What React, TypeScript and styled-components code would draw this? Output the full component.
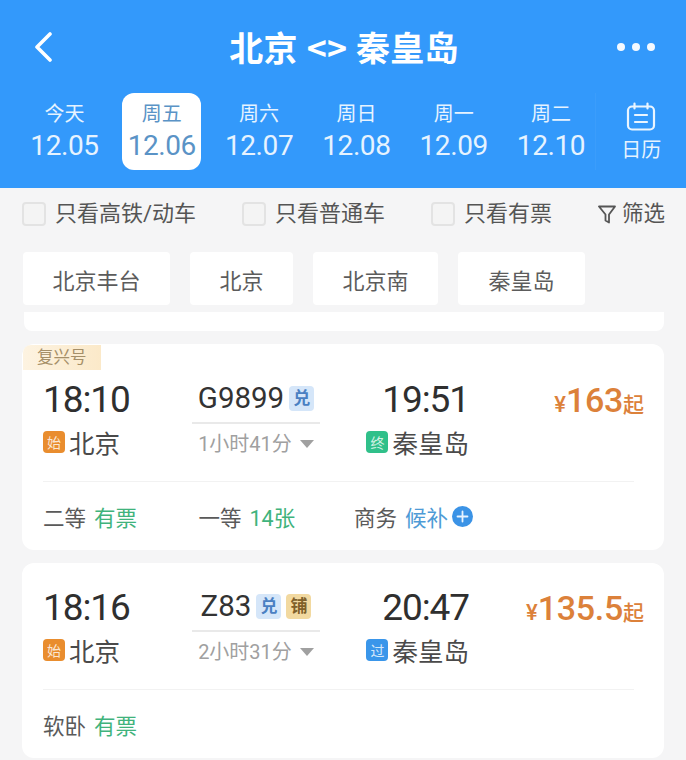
import React from "react";
import styled, { createGlobalStyle } from "styled-components";

const Global = createGlobalStyle`
  html, body { margin: 0; padding: 0; background: #f5f5f6; }
  * { box-sizing: border-box; }
  body { font-family: Roboto, "Noto Sans CJK SC", sans-serif; }
`;

const Page = styled.div`
  width: 686px;
  height: 760px;
  overflow: hidden;
  background: #f5f5f6;
`;

const Header = styled.header`
  height: 188px;
  background: #3399fb;
  color: #fff;
`;

const TitleBar = styled.div`
  height: 93px;
  display: grid;
  grid-template-columns: 1fr auto 1fr;
  align-items: center;
  padding: 0 31px 0 33px;
`;

const BackButton = styled.div`
  display: flex;
  align-items: center;
`;

const Title = styled.h1`
  margin: 0;
  font-family: "Noto Sans CJK SC", sans-serif;
  font-size: 34px;
  font-weight: 700;
  line-height: 1;
  letter-spacing: 0.2px;
  word-spacing: 1px;
`;

const Dots = styled.div`
  justify-self: end;
  display: flex;
  gap: 7px;
`;

const Dot = styled.span`
  width: 8px;
  height: 8px;
  border-radius: 50%;
  background: #f4f9ff;
`;

const DateStrip = styled.div`
  display: flex;
  align-items: stretch;
  padding-left: 25px;
  height: 77px;
`;

const DateTabs = styled.div`
  display: flex;
  gap: 18.3px;
`;

const DateTab = styled.div<{ $active?: boolean }>`
  width: 79px;
  height: 77px;
  border-radius: 12px;
  display: flex;
  flex-direction: column;
  align-items: center;
  background: ${(p) => (p.$active ? "#fff" : "transparent")};
  color: ${(p) => (p.$active ? "#5a93c6" : "#e6f3ff")};
`;

const Weekday = styled.span`
  margin-top: 6px;
  height: 28px;
  font-size: 20px;
  line-height: 28px;
  font-family: "Noto Sans CJK SC", sans-serif;
`;

const DateText = styled.span`
  height: 38px;
  font-size: 28px;
  line-height: 38px;
  letter-spacing: -0.4px;
`;

const CalendarCell = styled.div`
  width: 91px;
  margin-left: 5px;
  border-left: 1px solid rgba(255, 255, 255, 0.04);
  display: flex;
  flex-direction: column;
  align-items: center;
  color: #e6f3ff;
  padding-top: 9px;
`;

const CalendarLabel = styled.span`
  margin-top: 3px;
  font-size: 20px;
  line-height: 30px;
  font-family: "Noto Sans CJK SC", sans-serif;
`;

const FilterRow = styled.div`
  height: 52px;
  display: flex;
  align-items: center;
  justify-content: space-between;
  padding: 0 21px 0 22px;
`;

const CheckItem = styled.label`
  display: flex;
  align-items: center;
  gap: 9px;
  font-size: 22px;
  line-height: 30px;
  color: #555;
`;

const CheckBox = styled.span`
  width: 24px;
  height: 24px;
  border: 2px solid #e3e3e3;
  border-radius: 4px;
  background: #f4f4f4;
`;

const FilterButton = styled.div`
  display: flex;
  align-items: center;
  gap: 6px;
  font-size: 21.5px;
  line-height: 30px;
  color: #555;
`;

const ChipRow = styled.div`
  display: flex;
  gap: 20px;
  margin-top: 12px;
  padding-left: 23px;
`;

const Chip = styled.div<{ $w: number }>`
  width: ${(p) => p.$w}px;
  height: 53px;
  background: #fff;
  border-radius: 4px;
  display: flex;
  align-items: center;
  justify-content: center;
  font-size: 22px;
  color: #5c5c5c;
`;

const Sliver = styled.div`
  height: 19px;
  margin: 7px 22px 0 24px;
  background: #fff;
  border-radius: 0 0 8px 8px;
`;

const Card = styled.article<{ $top: number; $mt: number }>`
  position: relative;
  margin: ${(p) => p.$mt}px 22px 0;
  padding: ${(p) => p.$top}px 20px 0 21px;
  background: #fff;
  border-radius: 12px;
`;

const Ribbon = styled.div`
  position: absolute;
  left: 1px;
  top: 1px;
  width: 78px;
  height: 25px;
  padding-left: 14px;
  border-radius: 8px 0 0 0;
  background: linear-gradient(90deg, #fdf3e1, #fbe9c9);
  font-size: 16.5px;
  line-height: 25px;
  color: #a58f68;
`;

const Route = styled.div`
  display: grid;
  grid-template-columns: 149px 128px 149px 1fr;
  height: 103px;
`;

const Stop = styled.div<{ $end?: boolean }>`
  display: flex;
  flex-direction: column;
  align-items: ${(p) => (p.$end ? "flex-end" : "flex-start")};
`;

const Time = styled.div`
  height: 44px;
  font-size: 37px;
  line-height: 44px;
  letter-spacing: -1.1px;
  color: #2f2f2f;
`;

const Station = styled.div`
  margin-top: 5px;
  display: flex;
  align-items: center;
  gap: 4px;
  height: 30px;
  font-size: 25.5px;
  line-height: 30px;
  color: #4a4a4a;
  font-family: "Noto Sans CJK SC", sans-serif;
`;

const StopBadge = styled.span<{ $bg: string }>`
  width: 22px;
  height: 22px;
  border-radius: 4px;
  background: ${(p) => p.$bg};
  color: rgba(255, 255, 255, 0.8);
  font-size: 14px;
  line-height: 22px;
  text-align: center;
`;

const TrainCol = styled.div`
  display: flex;
  flex-direction: column;
  align-items: center;
`;

const TrainLine = styled.div`
  height: 44px;
  width: 100%;
  display: flex;
  align-items: center;
  justify-content: center;
  gap: 5px;
  padding-bottom: 4px;
`;

const TrainNo = styled.span`
  font-size: 29.5px;
  line-height: 34px;
  color: #333;
`;

const TrainTag = styled.span<{ $kind: "blue" | "gold" }>`
  width: 25px;
  height: 25px;
  border-radius: 4px;
  background: ${(p) => (p.$kind === "blue" ? "#d5e6f9" : "#f2d9a0")};
  color: ${(p) => (p.$kind === "blue" ? "#4a80c2" : "#80602a")};
  font-size: 17px;
  font-weight: 700;
  line-height: 25px;
  text-align: center;
`;

const TrainRule = styled.div`
  width: 100%;
  height: 2px;
  background: #e9e9e9;
`;

const Duration = styled.div`
  margin-top: 5px;
  display: flex;
  align-items: center;
  gap: 8px;
  font-size: 20px;
  line-height: 30px;
  color: #a0a0a0;
`;

const Caret = styled.span`
  width: 0;
  height: 0;
  border-left: 7px solid transparent;
  border-right: 7px solid transparent;
  border-top: 8px solid #a0a0a0;
`;

const PriceCol = styled.div`
  display: flex;
  justify-content: flex-end;
  align-items: baseline;
  height: 44px;
  line-height: 44px;
  color: #dc813a;
`;

const Yen = styled.span`
  font-size: 22px;
  font-weight: 500;
`;

const Amount = styled.span`
  font-size: 34px;
  font-weight: 500;
  letter-spacing: -0.3px;
`;

const From = styled.span`
  font-size: 21px;
  font-weight: 500;
`;

const Divider = styled.div`
  height: 1px;
  background: #f2f2f2;
  margin-right: 10px;
`;

const SeatRow = styled.div`
  height: 68px;
  display: flex;
  align-items: center;
`;

const Seat = styled.div`
  width: 155.5px;
  display: flex;
  align-items: center;
  gap: 8px;
  font-size: 21.5px;
  color: #5a5a5a;
`;

const Avail = styled.span<{ $blue?: boolean }>`
  color: ${(p) => (p.$blue ? "#4e9bd6" : "#3fb37c")};
  display: flex;
  align-items: center;
  gap: 4px;
`;

const Back = () => (
  <svg width="20" height="30" viewBox="0 0 20 30" fill="none">
    <path d="M17 2 L4 15 L17 28" stroke="#fff" strokeWidth="3.6" strokeLinecap="round" strokeLinejoin="round" />
  </svg>
);

const CalendarIcon = () => (
  <svg width="30" height="29" viewBox="0 0 30 29" fill="none" stroke="#eaf5ff" strokeWidth="2.2" strokeLinecap="round">
    <rect x="2" y="4.5" width="26" height="23" rx="4" />
    <path d="M8.5 1.5v5M21.5 1.5v5M9 13h12M9 20h12" />
  </svg>
);

const Funnel = () => (
  <svg width="18" height="19" viewBox="0 0 18 19" fill="none" stroke="#555" strokeWidth="1.8" strokeLinejoin="round">
    <path d="M1 1.5h16L11 9.5V17.5L7.5 15.5V9.5Z" />
  </svg>
);

const Plus = () => (
  <svg width="21" height="21" viewBox="0 0 21 21">
    <circle cx="10.5" cy="10.5" r="10.5" fill="#3b93e6" />
    <path d="M10.5 5.5v10M5.5 10.5h10" stroke="#e8f4ff" strokeWidth="1.8" strokeLinecap="round" />
  </svg>
);

const dates = [
  ["今天", "12.05"],
  ["周五", "12.06"],
  ["周六", "12.07"],
  ["周日", "12.08"],
  ["周一", "12.09"],
  ["周二", "12.10"],
];

export default function App() {
  return (
    <Page>
      <Global />
      <Header>
        <TitleBar>
          <BackButton>
            <Back />
          </BackButton>
          <Title>北京 &lt;&gt; 秦皇岛</Title>
          <Dots>
            <Dot />
            <Dot />
            <Dot />
          </Dots>
        </TitleBar>
        <DateStrip>
          <DateTabs>
            {dates.map(([w, d], i) => (
              <DateTab key={d} $active={i === 1}>
                <Weekday>{w}</Weekday>
                <DateText>{d}</DateText>
              </DateTab>
            ))}
          </DateTabs>
          <CalendarCell>
            <CalendarIcon />
            <CalendarLabel>日历</CalendarLabel>
          </CalendarCell>
        </DateStrip>
      </Header>

      <FilterRow>
        <CheckItem>
          <CheckBox />
          只看高铁/动车
        </CheckItem>
        <CheckItem>
          <CheckBox />
          只看普通车
        </CheckItem>
        <CheckItem>
          <CheckBox />
          只看有票
        </CheckItem>
        <FilterButton>
          <Funnel />
          筛选
        </FilterButton>
      </FilterRow>

      <ChipRow>
        <Chip $w={147}>北京丰台</Chip>
        <Chip $w={103}>北京</Chip>
        <Chip $w={125}>北京南</Chip>
        <Chip $w={127}>秦皇岛</Chip>
      </ChipRow>

      <Sliver />

      <Card $top={34} $mt={13}>
        <Ribbon>复兴号</Ribbon>
        <Route>
          <Stop>
            <Time>18:10</Time>
            <Station>
              <StopBadge $bg="#e98d2e">始</StopBadge>
              北京
            </Station>
          </Stop>
          <TrainCol>
            <TrainLine>
              <TrainNo>G9899</TrainNo>
              <TrainTag $kind="blue">兑</TrainTag>
            </TrainLine>
            <TrainRule />
            <Duration>
              1小时41分
              <Caret />
            </Duration>
          </TrainCol>
          <Stop $end>
            <Time>19:51</Time>
            <Station>
              <StopBadge $bg="#30c08a">终</StopBadge>
              秦皇岛
            </Station>
          </Stop>
          <PriceCol>
            <Yen>¥</Yen>
            <Amount>163</Amount>
            <From>起</From>
          </PriceCol>
        </Route>
        <Divider />
        <SeatRow>
          <Seat>
            二等<Avail>有票</Avail>
          </Seat>
          <Seat>
            一等<Avail>14张</Avail>
          </Seat>
          <Seat>
            商务
            <Avail $blue>
              候补
              <Plus />
            </Avail>
          </Seat>
        </SeatRow>
      </Card>

      <Card $top={23} $mt={13}>
        <Route>
          <Stop>
            <Time>18:16</Time>
            <Station>
              <StopBadge $bg="#e98d2e">始</StopBadge>
              北京
            </Station>
          </Stop>
          <TrainCol>
            <TrainLine>
              <TrainNo>Z83</TrainNo>
              <TrainTag $kind="blue">兑</TrainTag>
              <TrainTag $kind="gold">铺</TrainTag>
            </TrainLine>
            <TrainRule />
            <Duration>
              2小时31分
              <Caret />
            </Duration>
          </TrainCol>
          <Stop $end>
            <Time>20:47</Time>
            <Station>
              <StopBadge $bg="#3a96ea">过</StopBadge>
              秦皇岛
            </Station>
          </Stop>
          <PriceCol>
            <Yen>¥</Yen>
            <Amount>135.5</Amount>
            <From>起</From>
          </PriceCol>
        </Route>
        <Divider />
        <SeatRow>
          <Seat>
            软卧<Avail>有票</Avail>
          </Seat>
        </SeatRow>
      </Card>
    </Page>
  );
}
